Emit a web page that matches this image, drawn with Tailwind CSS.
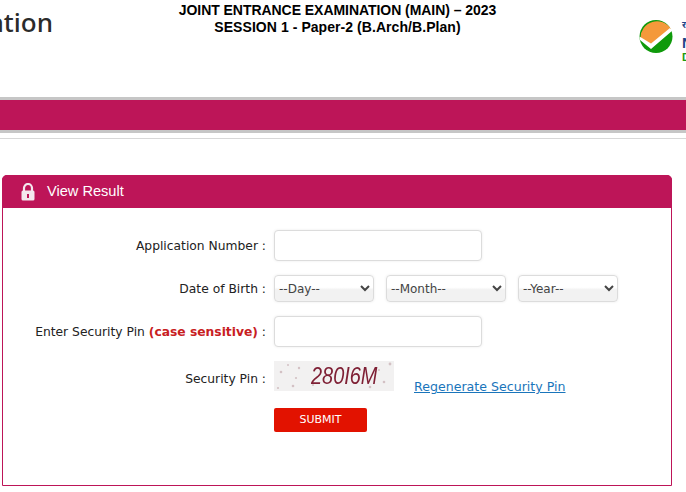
<!DOCTYPE html>
<html lang="en">
<head>
  <meta charset="UTF-8" />
  <title>View Result</title>
  <script src="https://cdn.jsdelivr.net/npm/@tailwindcss/browser@4"></script>
</head>
<body class="bg-white h-[492px] overflow-hidden font-['DejaVu_Sans',sans-serif] text-[12.3px] text-[#222]">

  <!-- Header -->
  <div class="flex h-[97px]">
    <div class="w-[53px] h-[44px] overflow-hidden flex justify-end items-center shrink-0">
      <span class="whitespace-nowrap font-['Noto_Sans',sans-serif] font-medium text-[26px] text-[#2b2b2b]">Examination</span>
    </div>
    <div class="w-[569px] pt-[2px] text-center font-['Liberation_Sans',sans-serif] font-bold text-[14px] leading-[17px] text-black">
      <div class="tracking-[-0.05px]">JOINT ENTRANCE EXAMINATION (MAIN) – 2023</div>
      <div class="tracking-[0.06px]">SESSION 1 - Paper-2 (B.Arch/B.Plan)</div>
    </div>
    <div class="w-[64px] overflow-hidden pt-[19px] pl-[17px]">
      <svg width="47" height="46" viewBox="0 0 47 46">
        <circle cx="17" cy="17.5" r="16.5" fill="#0f9a0b" />
        <path d="M1.5 19 L12 25 L32 10 A16.5 16.5 0 0 0 1.5 19 Z" fill="#f4993b" />
        <path d="M0.5 17.5 L12 24.5 L31 9 L33.5 11.5 L12 30 L1 21 Z" fill="#fff" />
        <text x="43" y="9" font-family="Noto Sans, sans-serif" font-size="9" font-weight="700" fill="#1c4587">र</text>
        <text x="43" y="29" font-family="Liberation Sans, sans-serif" font-size="15" font-weight="700" fill="#1c4587">N</text>
        <text x="43" y="42" font-family="Liberation Sans, sans-serif" font-size="11" font-weight="700" fill="#1d9a10">D</text>
      </svg>
    </div>
  </div>

  <!-- Band -->
  <div class="h-[36px] bg-[#bd1558] border-y-[3px] border-[#c6c6c6]"></div>
  <div class="h-px mt-[5px] bg-[#d8d8d8]"></div>

  <!-- Panel -->
  <div class="mt-[36px] ml-[2px] w-[670px] h-[311px] border border-[#bd1558] rounded-t-[5px]">
    <div class="-mx-px -mt-px h-[33px] bg-[#bd1558] rounded-t-[5px] flex items-center pl-[19px] gap-[12px] text-white font-['Liberation_Sans',sans-serif] text-[14.6px]">
      <svg width="14" height="18" viewBox="0 0 14 18">
        <path d="M3 8V5a4 4 0 0 1 8 0v3" fill="none" stroke="#f4e8ee" stroke-width="2.2" />
        <rect x="0.5" y="7.5" width="13" height="10" rx="1.5" fill="#f4e8ee" />
        <rect x="6" y="11" width="2" height="4" fill="#bd1558" />
      </svg>
      <span>View Result</span>
    </div>

    <div class="pt-[22px]">
      <div class="flex items-center h-[31px] mb-[14px]">
        <label class="w-[263px] pt-[1px] text-right">Application Number :</label>
        <input type="text" class="ml-[8px] w-[208px] h-[31px] bg-white border border-[#dcdcdc] rounded-[4px] shadow-[0_0_3px_rgba(0,0,0,0.08)]" />
      </div>

      <div class="flex items-center h-[27px] mb-[14px]">
        <label class="w-[263px] pt-[1px] text-right">Date of Birth :</label>
        <select class="ml-[8px] w-[100px] h-[27px] pt-[1px] text-[12px] text-[#444] font-['DejaVu_Sans',sans-serif] border border-[#dcdcdc] rounded-[4px] bg-[linear-gradient(#ffffff_45%,#f2f2f2_55%)] shadow-[0_0_3px_rgba(0,0,0,0.08)]">
          <option>--Day--</option>
        </select>
        <select class="ml-[12px] w-[120px] h-[27px] pt-[1px] text-[12px] text-[#444] font-['DejaVu_Sans',sans-serif] border border-[#dcdcdc] rounded-[4px] bg-[linear-gradient(#ffffff_45%,#f2f2f2_55%)] shadow-[0_0_3px_rgba(0,0,0,0.08)]">
          <option>--Month--</option>
        </select>
        <select class="ml-[12px] w-[100px] h-[27px] pt-[1px] text-[12px] text-[#444] font-['DejaVu_Sans',sans-serif] border border-[#dcdcdc] rounded-[4px] bg-[linear-gradient(#ffffff_45%,#f2f2f2_55%)] shadow-[0_0_3px_rgba(0,0,0,0.08)]">
          <option>--Year--</option>
        </select>
      </div>

      <div class="flex items-center h-[31px] mb-[14px]">
        <label class="w-[263px] pt-[1px] text-right">Enter Security Pin <span class="font-bold text-[#c8201f]">(case sensitive)</span> :</label>
        <input type="text" class="ml-[8px] w-[208px] h-[31px] bg-white border border-[#dcdcdc] rounded-[4px] shadow-[0_0_3px_rgba(0,0,0,0.08)]" />
      </div>

      <div class="flex h-[30px] mb-[17px]">
        <label class="w-[263px] text-right pt-[9px]">Security Pin :</label>
        <div class="relative ml-[8px] w-[120px] h-[30px] bg-[#f2f1f1] overflow-hidden">
          <svg class="absolute inset-0" width="120" height="30" viewBox="0 0 120 30">
            <g fill="#d3c1c4">
              <circle cx="7" cy="11" r="1.3" /><circle cx="19" cy="25" r="1.3" /><circle cx="25" cy="7" r="1.2" />
              <circle cx="22" cy="17" r="1.1" /><circle cx="39" cy="24" r="1.1" /><circle cx="96" cy="26" r="1.3" />
              <circle cx="110" cy="21" r="1.3" /><circle cx="116" cy="3" r="1.4" /><circle cx="4" cy="27" r="1.1" />
              <circle cx="105" cy="9" r="1" /><circle cx="14" cy="4" r="1" />
            </g>
          </svg>
          <span class="absolute left-[37px] top-[1px] origin-left scale-x-[0.83] blur-[0.3px] font-['Liberation_Sans',sans-serif] italic text-[24px] leading-[28px] text-[#7f2035]">280I6M</span>
        </div>
        <a href="#" class="ml-[20px] pt-[17px] text-[12.6px] text-[#1a75bb] underline whitespace-nowrap">Regenerate Security Pin</a>
      </div>

      <div class="pl-[271px]">
        <button class="block w-[93px] h-[24px] pt-[1px] bg-[#e21200] text-white text-[11px] rounded-[2px]">SUBMIT</button>
      </div>
    </div>
  </div>
</body>
</html>
